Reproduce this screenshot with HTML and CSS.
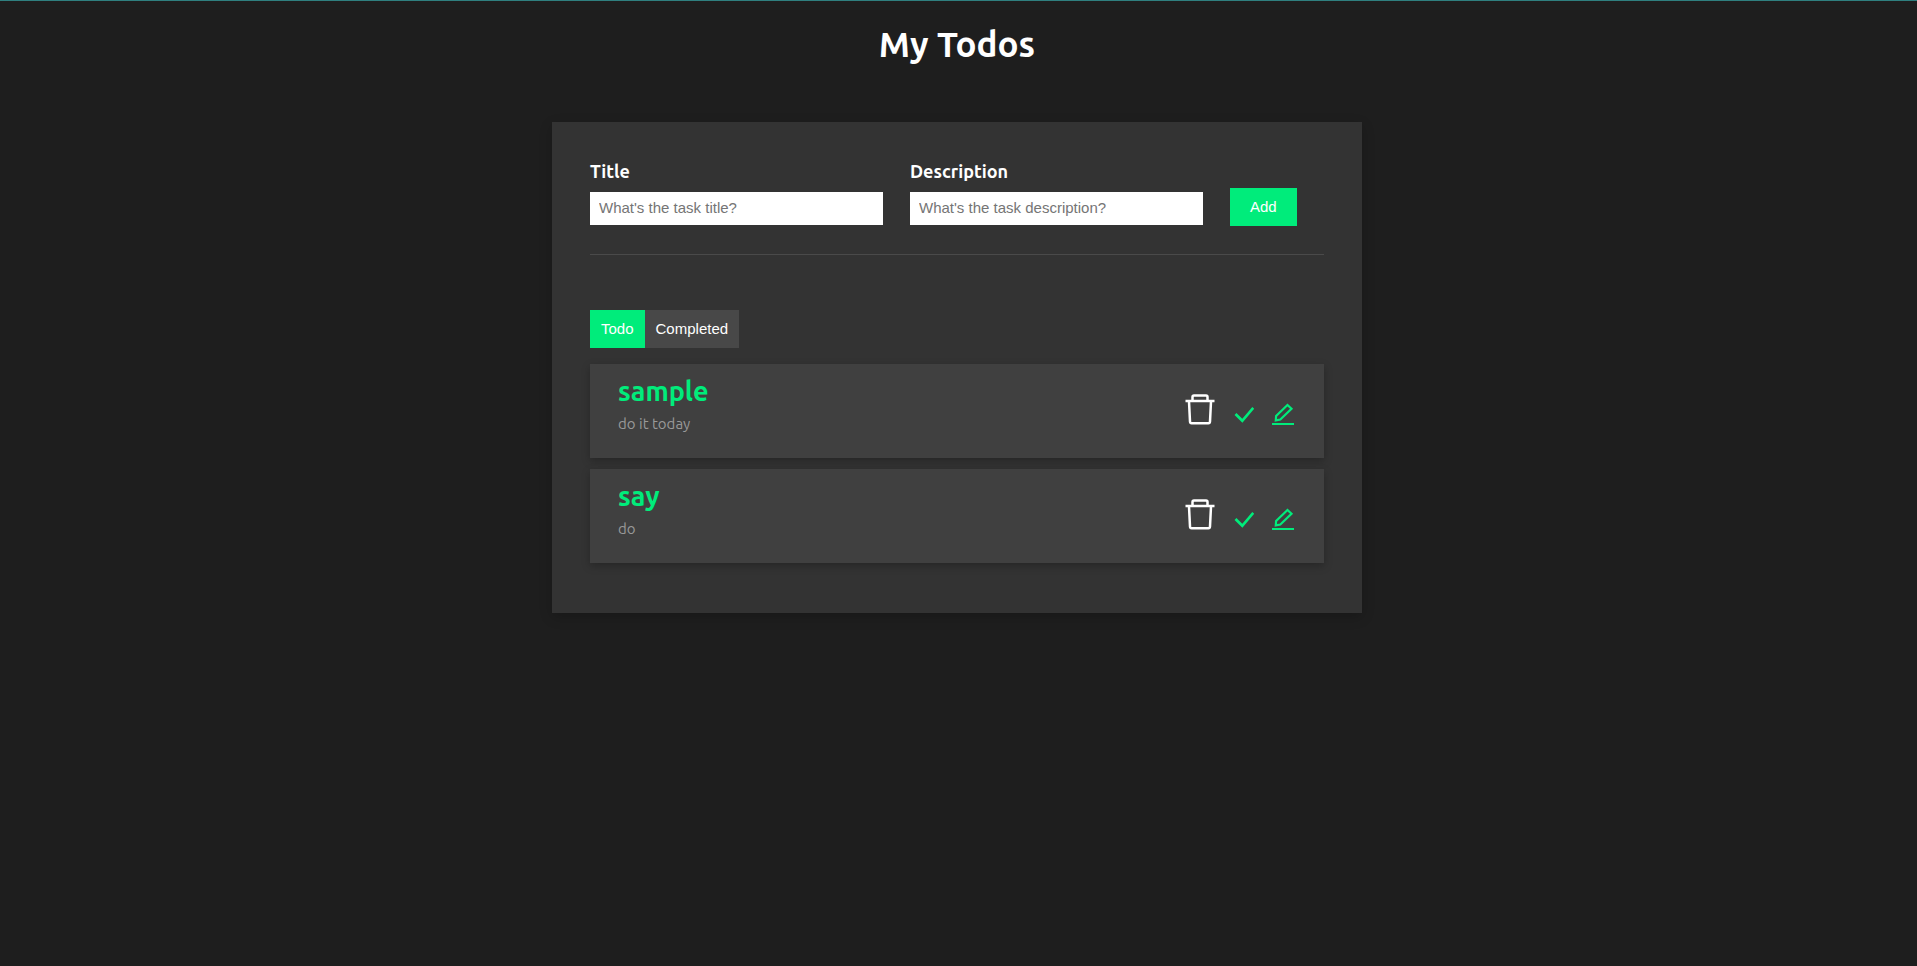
FILE: index.html
```html
<!DOCTYPE html>
<html lang="en">
<head>
<meta charset="utf-8">
<title>My Todos</title>
<link rel="stylesheet" href="styles.css">
</head>
<body>
<svg class="sprite" aria-hidden="true">
  <symbol id="trash" viewBox="0 0 31 32">
    <path d="M.5 7H29.500M7.500 7V3Q7.500 1.500 9 1.500H21Q22.500 1.500 22.500 3V7M4 7.500L5 27.500Q5.100 29.200 6.600 29.200H23.400Q24.900 29.200 25 27.500L26 7.500" fill="none" stroke="currentColor" stroke-width="2.500"/>
  </symbol>
  <symbol id="check" viewBox="0 0 20 20">
    <path d="M1.500 8L8.300 14.800L19.300 1.800" fill="none" stroke="currentColor" stroke-width="2.700"/>
  </symbol>
  <symbol id="edit" viewBox="0 0 22 23">
    <path d="M0 21H22M15.500 2L19.500 5.700L8.300 16.500L3.800 17.300L4.100 12.900Z" fill="none" stroke="currentColor" stroke-width="2.200"/>
  </symbol>
</svg>
<main class="page">
  <h1 class="page-title">My Todos</h1>
  <section class="panel">
    <form class="todo-form">
      <div class="field">
        <label for="title">Title</label>
        <input id="title" type="text" placeholder="What's the task title?">
      </div>
      <div class="field">
        <label for="description">Description</label>
        <input id="description" type="text" placeholder="What's the task description?">
      </div>
      <button class="add-button" type="button">Add</button>
    </form>
    <div class="tabs">
      <button class="tab tab-active" type="button">Todo</button>
      <button class="tab" type="button">Completed</button>
    </div>
    <ul class="todo-list">
      <li class="todo">
        <div>
          <h3 class="todo-title">sample</h3>
          <p class="todo-text">do it today</p>
        </div>
        <div class="actions">
          <button class="action action-delete" type="button" aria-label="Delete"><svg width="31" height="32"><use href="#trash"/></svg></button>
          <button class="action" type="button" aria-label="Complete"><svg width="20" height="20"><use href="#check"/></svg></button>
          <button class="action" type="button" aria-label="Edit"><svg width="22" height="23"><use href="#edit"/></svg></button>
        </div>
      </li>
      <li class="todo">
        <div>
          <h3 class="todo-title">say</h3>
          <p class="todo-text">do</p>
        </div>
        <div class="actions">
          <button class="action action-delete" type="button" aria-label="Delete"><svg width="31" height="32"><use href="#trash"/></svg></button>
          <button class="action" type="button" aria-label="Complete"><svg width="20" height="20"><use href="#check"/></svg></button>
          <button class="action" type="button" aria-label="Edit"><svg width="22" height="23"><use href="#edit"/></svg></button>
        </div>
      </li>
    </ul>
  </section>
</main>
</body>
</html>
```
FILE: styles.css
```css
* {
  box-sizing: border-box;
  margin: 0;
  padding: 0;
}

body {
  min-height: 100vh;
  border-top: 1px solid #2f7f7f;
  background: #1e1e1e;
  color: #fff;
  font-family: Ubuntu, "Noto Sans", sans-serif;
}

button,
input {
  border: 0;
  border-radius: 0;
  font-family: "Liberation Sans", Arial, sans-serif;
  font-size: 15px;
}

button {
  cursor: pointer;
}

.sprite {
  display: none;
}

.page {
  padding: 20px 3px 20px 0;
}

.page-title {
  margin-bottom: 55px;
  font-size: 35px;
  font-weight: 600;
  line-height: 46px;
  text-align: center;
}

.panel {
  max-width: 810px;
  margin: 0 auto;
  padding: 38px 38px 50px;
  background: #333;
  box-shadow: 0 4px 12px rgba(0, 0, 0, 0.2);
}

.todo-form {
  display: flex;
  align-items: flex-end;
  gap: 27px;
  padding-bottom: 28px;
  border-bottom: 1px solid #4a4a4a;
}

.field {
  flex: 0 1 293px;
  min-width: 0;
  padding-bottom: 1px;
}

.field label {
  display: block;
  margin-bottom: 10px;
  font-size: 18px;
  font-weight: 600;
  line-height: 22px;
}

.field input {
  display: block;
  width: 100%;
  height: 33px;
  padding: 0 9px 2px;
  background: #fff;
  color: #333;
}

.field input::placeholder {
  color: #757575;
}

.add-button {
  height: 38px;
  padding: 0 20px 1px;
  background: #00ec7b;
  color: #fff;
}

.tabs {
  display: flex;
  margin: 55px 0 16px;
}

.tab {
  height: 38px;
  padding: 0 11px 1px;
  background: #484848;
  color: #fff;
}

.tab-active {
  background: #00ec7b;
}

.todo-list {
  display: grid;
  gap: 11px;
  list-style: none;
}

.todo {
  display: flex;
  justify-content: space-between;
  align-items: center;
  height: 94px;
  padding: 0 30px 12px 28px;
  background: #404040;
  box-shadow: 0 3px 8px rgba(0, 0, 0, 0.25);
}

.todo-title {
  color: #00ec7b;
  font-size: 27px;
  font-weight: 600;
  line-height: 38px;
}

.todo-text {
  color: #999;
  font-size: 15px;
  line-height: 28px;
}

.actions {
  display: flex;
  align-items: flex-end;
  gap: 18px;
  padding-top: 10px;
}

.action {
  background: none;
  color: #00ec7b;
}

.action svg {
  display: block;
}

.action-delete {
  color: #fff;
}
```
